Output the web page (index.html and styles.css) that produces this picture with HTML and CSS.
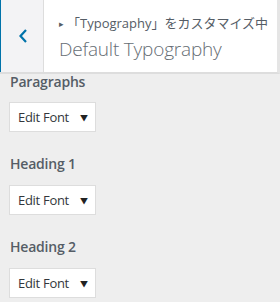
FILE: index.html
```html
<!DOCTYPE html>
<html lang="ja">
<head>
    <meta charset="UTF-8">
    <title>Default Typography</title>
    <link rel="stylesheet" href="styles.css">
</head>
<body>
    <div class="panel">
        <div class="panel-header">
            <button class="back" aria-label="戻る">
                <svg width="10" height="16" viewBox="0 0 10 16"><path d="M8 2 L2.5 8 L8 14" fill="none" stroke="#0073aa" stroke-width="2.2"/></svg>
            </button>
            <div class="panel-title">
                <span class="crumb"><span class="tri">&#9656;</span>「Typography」をカスタマイズ中</span>
                <h3>Default Typography</h3>
            </div>
        </div>
        <ul class="controls">
            <li class="control">
                <span class="label">Paragraphs</span>
                <div class="select">Edit Font <span class="arrow">&#9660;</span></div>
            </li>
            <li class="control">
                <span class="label">Heading 1</span>
                <div class="select">Edit Font <span class="arrow">&#9660;</span></div>
            </li>
            <li class="control">
                <span class="label">Heading 2</span>
                <div class="select">Edit Font <span class="arrow">&#9660;</span></div>
            </li>
        </ul>
    </div>
</body>
</html>
```

FILE: styles.css
```css
body {
    margin: 0;
    padding: 0;
    background: #eeeeee;
    font-family: "Open Sans", "Noto Sans CJK JP", sans-serif;
    color: #555d66;
}
.panel {
    width: 280px;
    height: 302px;
    overflow: hidden;
}
.panel-header {
    display: flex;
    height: 72px;
    background: #fff;
    border-bottom: 2px solid #dddddd;
    border-right: 3px solid #e5e5e5;
}
.back {
    width: 44px;
    height: 72px;
    padding: 0 0 0 1px;
    margin: 0;
    background: #f3f3f5;
    border: none;
    border-left: 1px solid #0073aa;
    border-right: 1px solid #dddddd;
    display: flex;
    justify-content: center;
    align-items: center;
}
.panel-title {
    padding: 14px 0 0 15px;
}
.crumb {
    display: block;
    font-size: 13px;
    line-height: 18px;
    color: #555d66;
    white-space: nowrap;
}
.tri {
    font-size: 9px;
    margin-right: 3px;
    vertical-align: 1px;
}
h3 {
    margin: 3px 0 0 0;
    font-size: 19px;
    font-weight: 300;
    letter-spacing: -0.2px;
    line-height: 26px;
    color: #666d74;
}
.controls {
    list-style: none;
    margin: 0;
    padding: 0 0 0 9px;
}
.control {
    display: flex;
    flex-direction: column;
    align-items: flex-start;
}
.label {
    font-size: 14px;
    font-weight: 600;
    line-height: 16px;
    letter-spacing: -0.2px;
    margin: 0 0 12px 1px;
}
.control + .control .label {
    margin-top: 24px;
    margin-bottom: 13px;
}
.select {
    box-sizing: border-box;
    width: 87px;
    height: 30px;
    padding: 0 0 0 8px;
    background: #fff;
    border: 1px solid #dddddd;
    font-size: 13px;
    letter-spacing: -0.3px;
    line-height: 28px;
    color: #32373c;
    white-space: nowrap;
}
.arrow {
    font-size: 8px;
    margin-left: 8px;
    vertical-align: 1px;
    color: #222;
}
```
